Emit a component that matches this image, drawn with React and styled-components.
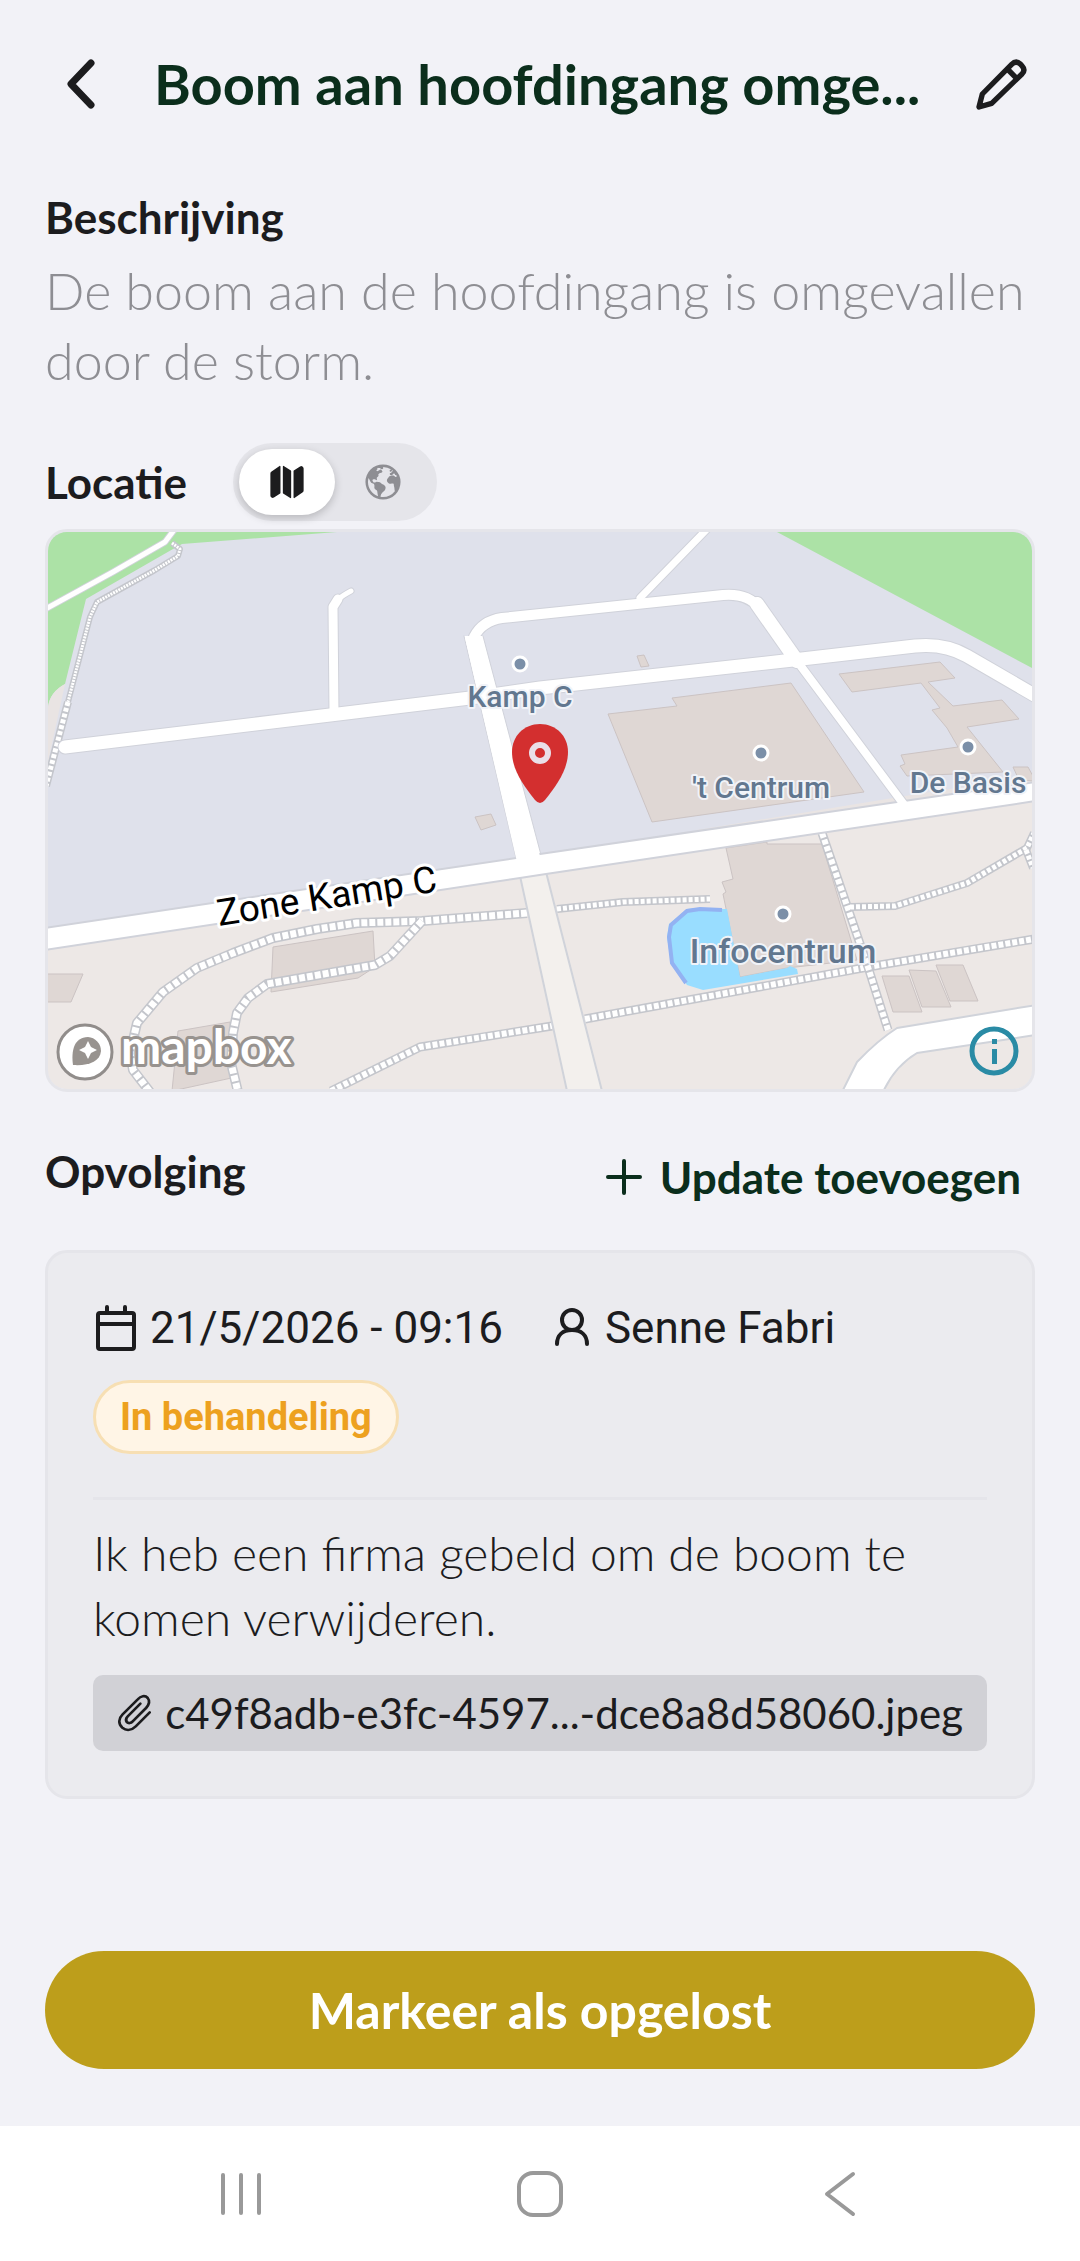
import React, { useState } from "react";
import styled, { createGlobalStyle } from "styled-components";
import { IoMap, IoEarth } from "react-icons/io5";

const color = {
  page: "#f2f2f7",
  ink: "#1c1c1e",
  brand: "#0b2e1c",
  muted: "#8e8e93",
  line: "#e5e5ea",
  card: "#ebebef",
  chip: "#d1d1d6",
  gold: "#bd9e1b",
  amber: "#eda11f",
  nav: "#999999",
};

const Global = createGlobalStyle`
  * { box-sizing: border-box; }
  body {
    margin: 0;
    background: ${color.page};
    color: ${color.ink};
    font-family: "Lato", "Liberation Sans", sans-serif;
  }
  button {
    margin: 0;
    padding: 0;
    border: 0;
    background: none;
    color: inherit;
    font: inherit;
    cursor: pointer;
  }
  h1, h2, p { margin: 0; }
  svg { display: block; }
`;

const Screen = styled.div`
  display: flex;
  flex-direction: column;
  min-height: 100vh;
`;

const Header = styled.header`
  display: flex;
  align-items: center;
  padding: 52px 45px 21px;
`;

const IconButton = styled.button`
  display: flex;
  flex: none;
  align-items: center;
  justify-content: ${(p) => p.$side};
  width: ${(p) => p.$width}px;
  height: 64px;
`;

const Title = styled.h1`
  flex: 1;
  overflow: hidden;
  color: ${color.brand};
  font-size: 56px;
  font-weight: 700;
  line-height: 64px;
  white-space: nowrap;
`;

const Content = styled.main`
  display: flex;
  flex: 1;
  flex-direction: column;
  padding: 52px 45px 40px;
`;

const Heading = styled.h2`
  font-size: 44px;
  font-weight: 700;
  line-height: 56px;
`;

const Description = styled.p`
  margin-top: 10px;
  color: ${color.muted};
  font-size: 52px;
  font-weight: 300;
  line-height: 70px;
`;

const LocationBar = styled.div`
  display: flex;
  align-items: center;
  gap: 46px;
  margin-top: 48px;
`;

const Toggle = styled.div`
  display: flex;
  padding: 6px;
  border-radius: 39px;
  background: ${color.line};
`;

const ToggleOption = styled.button`
  display: flex;
  align-items: center;
  justify-content: center;
  width: 96px;
  height: 66px;
  border-radius: 33px;
  background: ${(p) => (p.$active ? "#ffffff" : "transparent")};
  box-shadow: ${(p) => (p.$active ? "0 3px 8px rgba(0, 0, 0, 0.2)" : "none")};
  color: ${(p) => (p.$active ? color.ink : color.muted)};
`;

const MapCard = styled.div`
  position: relative;
  margin-top: 8px;
  overflow: hidden;
  border: 3px solid ${color.line};
  border-radius: 22px;
`;

const MapDrawing = styled.svg`
  width: 100%;
  height: auto;
`;

const MapLink = styled.a`
  position: absolute;
  bottom: 6px;
  left: 6px;
`;

const InfoButton = styled.button`
  position: absolute;
  right: 12px;
  bottom: 12px;
`;

const FollowUpBar = styled.div`
  display: flex;
  align-items: flex-start;
  justify-content: space-between;
  margin-top: 51px;
`;

const AddButton = styled.button`
  display: flex;
  align-items: center;
  gap: 16px;
  padding: 6px 14px;
  color: ${color.brand};
  font-size: 44px;
  font-weight: 700;
  line-height: 56px;
`;

const UpdateCard = styled.article`
  margin-top: 39px;
  padding: 45px;
  border: 3px solid ${color.line};
  border-radius: 22px;
  background: ${color.card};
`;

const Meta = styled.div`
  display: flex;
  gap: 48px;
`;

const MetaItem = styled.span`
  display: flex;
  align-items: center;
  gap: 12px;
  font-family: Roboto, "Liberation Sans", sans-serif;
  font-size: 44px;
  line-height: 60px;
`;

const Badge = styled.span`
  display: inline-block;
  margin-top: 22px;
  padding: 0 24px;
  border: 3px solid #f7dfb3;
  border-radius: 37px;
  background: #fff5e6;
  color: ${color.amber};
  font-family: Roboto, "Liberation Sans", sans-serif;
  font-size: 38px;
  font-weight: 700;
  line-height: 68px;
  vertical-align: top;
`;

const Message = styled.p`
  margin-top: 43px;
  padding-top: 20px;
  border-top: 3px solid ${color.line};
  font-size: 48px;
  font-weight: 300;
  line-height: 65px;
`;

const Attachment = styled.button`
  display: flex;
  align-items: center;
  gap: 12px;
  width: 100%;
  margin-top: 25px;
  padding: 0 24px;
  border-radius: 10px;
  background: ${color.chip};
  font-size: 42px;
  line-height: 76px;
  text-align: left;
  white-space: nowrap;
`;

const Footer = styled.footer`
  padding: 0 45px 57px;
`;

const PrimaryButton = styled.button`
  width: 100%;
  border-radius: 59px;
  background: ${color.gold};
  color: #ffffff;
  font-size: 50px;
  font-weight: 700;
  line-height: 118px;
`;

const SystemNav = styled.nav`
  display: flex;
  align-items: center;
  justify-content: space-around;
  padding: 36px 91px;
  background: #ffffff;
  color: ${color.nav};
`;

const NavButton = styled.button`
  display: flex;
  align-items: center;
  justify-content: center;
  width: 64px;
  height: 63px;
`;

function Stroke({ w, h, box, width, children }) {
  return (
    <svg
      width={w}
      height={h}
      viewBox={box || `0 0 ${w} ${h}`}
      fill="none"
      stroke="currentColor"
      strokeWidth={width}
      strokeLinecap="round"
      strokeLinejoin="round"
      aria-hidden="true"
    >
      {children}
    </svg>
  );
}

const footways = [
  { d: "M527 913 L422 921 L357 923 L317 929 L273 938 L233 953 L197 968 L163 992 L137 1023 L130 1053 L133 1070 L150 1092", w: 7 },
  { d: "M422 921 L390 956 L375 965 L267 984 L248 998 L237 1013 L233 1033 L231 1063 L238 1092", w: 7 },
  { d: "M331 1091 L420 1047 L552 1026", w: 6 },
  { d: "M557 909 L623 902 L710 899", w: 5 },
  { d: "M585 1019 L868 967 L1034 939", w: 6 },
  { d: "M822 833 L868 967 L888 1030", w: 6 },
  { d: "M850 907 L895 906 L967 883 L1027 848 L1034 833", w: 5 },
  { d: "M1026 850 L1033 868", w: 5 },
  { d: "M172 543 L180 549 L178 556 L155 570 L97 602 L90 617 L68 702", w: 3 },
  { d: "M68 702 L46 786", w: 5 },
];

const buildings = [
  "608,714 677,706 672,698 791,683 864,792 652,822",
  "637,656 644,655 649,666 641,667",
  "839,674 940,662 955,678 928,682 953,706 1002,700 1019,719 967,727 1003,772 907,776 900,766 905,764 901,755 958,747 947,728 932,710 940,708 921,683 852,692",
  "1013,767 1028,767 1034,778 1034,781 1019,780",
  "475,817 491,814 496,825 481,830",
  "273,947 373,931 375,967 358,978 271,992",
  "46,974 83,974 71,1002 46,1002",
  "178,1031 230,1022 236,1077 172,1091",
  "726,848 767,842 767,844 822,844 857,960 787,968 740,977 723,894 726,892 722,882 733,879",
  "882,976 909,976 922,1012 893,1012",
  "909,970 936,971 951,1007 922,1007",
  "936,965 963,965 978,1001 950,1001",
];

const places = [
  { name: "Kamp C", x: 520, dot: 664, y: 707, size: 30 },
  { name: "'t Centrum", x: 761, dot: 753, y: 798, size: 30 },
  { name: "De Basis", x: 968, dot: 747, y: 793, size: 30 },
  { name: "Infocentrum", x: 783, dot: 914, y: 963, size: 34 },
];

const roads = [
  { d: "M65 747 L330 715 L470 698 L540 688 L793 660 L915 646 Q945 643 967 656 L1036 696", w: 13 },
  { d: "M334 713 L333 607 L338 599", w: 9 },
  { d: "M333 607 Q334 600 351 591", w: 5 },
  { d: "M474 637 Q482 621 502 618 L560 612 L723 595 Q748 593 759 608", w: 10 },
  { d: "M757 604 L797 661", w: 14 },
  { d: "M797 661 L905 806", w: 8 },
  { d: "M640 598 L708 528", w: 7 },
  { d: "M40 612 L113 572 L165 542 L177 526", w: 5 },
];

function MapPicture() {
  return (
    <MapDrawing viewBox="48 532 984 557" role="img" aria-label="Kaart van Zone Kamp C">
      <rect x="48" y="532" width="984" height="557" fill="#dfe1eb" />
      <path d="M48 532 H337 L182 544 L173 549 L86 599 L65 684 Q50 692 48 707 Z" fill="#ace2a6" />
      <path d="M65 684 Q50 692 48 707 V762 Z" fill="#e9e4e3" />
      <path d="M777 532 H1032 V668 Z" fill="#ace2a6" />
      <path d="M48 938 L530 868 L1032 792 V1089 H48 Z" fill="#ede8e6" />
      <path d="M697 830 L905 796 L1032 776 V790 L690 840 Z" fill="#e9e4e3" />

      <g fill="#dfd7d4" stroke="#cbc3c3" strokeWidth="1">
        {buildings.map((points) => (
          <polygon key={points} points={points} />
        ))}
      </g>

      <path d="M722 909 L700 908 L687 909 L669 924 L667 937 L671 963 L687 985 L703 990 L798 974 L797 969 L790 966 L787 968 L740 977 L727 909 Z" fill="#99ddff" />
      <path d="M722 910 L700 909 L687 911 L671 925 L669 937 L672 963 L686 983" fill="none" stroke="#93b2f2" strokeWidth="4" />

      {footways.map(({ d, w }) => (
        <g key={d} fill="none" strokeLinejoin="round">
          <path d={d} stroke="#c4c6cc" strokeWidth={w + 3} />
          <path d={d} stroke="#ffffff" strokeWidth={w} strokeDasharray={w > 4 ? `${w - 1} 2` : "2 1"} />
        </g>
      ))}

      <path d="M520 876 L546 872 L602 1091 H567 Z" fill="#f3f0ed" stroke="#d0d3da" strokeWidth="2" />
      <g fill="none" strokeLinejoin="round" strokeLinecap="round">
        {roads.map(({ d, w }) => (
          <path key={d} d={d} stroke="#d0d2da" strokeWidth={w + 2} />
        ))}
        <path d="M464 636 L516 858 L541 855 L483 636" fill="#ffffff" stroke="#d0d2da" strokeWidth="1" />
        <path d="M44 928 L516 858 L540 854 L897 802 L1036 782 V801 L546 874 L520 878 L44 950 Z" fill="#ffffff" stroke="#d0d2da" strokeWidth="2" />
        <path d="M842 1092 L857 1062 Q878 1040 897 1028 L1036 1005 V1035 L917 1053 Q895 1066 883 1092 Z" fill="#ffffff" stroke="#d0d3da" strokeWidth="2" />
        {roads.map(({ d, w }) => (
          <path key={d} d={d} stroke="#ffffff" strokeWidth={w} />
        ))}
        <path d="M465 638 L517 862 L541 860 L482 638 Z" fill="#ffffff" />
      </g>

      {places.map(({ name, x, dot, y, size }) => (
        <g key={name} fontFamily="Roboto, 'Liberation Sans', sans-serif" fontWeight="500">
          <circle cx={x} cy={dot} r="7" fill="#7b8fa8" stroke="#ffffff" strokeWidth="3" />
          <text
            x={x}
            y={y}
            fontSize={size}
            textAnchor="middle"
            fill="#62778f"
            stroke="#f1f3f8"
            strokeWidth="4"
            strokeLinejoin="round"
            paintOrder="stroke"
          >
            {name}
          </text>
        </g>
      ))}
      <text
        x="219"
        y="926"
        transform="rotate(-9 219 926)"
        fontFamily="Roboto, 'Liberation Sans', sans-serif"
        fontSize="37"
        fill="#000000"
        stroke="#ffffff"
        strokeWidth="6"
        strokeLinejoin="round"
        paintOrder="stroke"
      >
        Zone Kamp C
      </text>

      <path d="M540 724 C524 724 512 736 512 752 C512 770 524 786 535 800 Q540 806 545 800 C556 786 568 770 568 752 C568 736 556 724 540 724 Z" fill="#d32f2f" />
      <circle cx="540" cy="753" r="8" fill="none" stroke="#eadfe8" strokeWidth="6" />
    </MapDrawing>
  );
}

function MapboxLogo() {
  return (
    <svg width="246" height="62" viewBox="54 1020 246 62" aria-hidden="true">
      <circle cx="85" cy="1051" r="27" fill="#ffffff" stroke="#918d8b" strokeWidth="3" />
      <path d="M73 1064 C71 1050 74 1036 88 1036 A14 14 0 0 1 101 1050 C100 1061 88 1065 73 1064 Z" fill="#98938f" />
      <path d="M88 1040 L91 1046 L97 1049 L91 1052 L88 1058 L85 1052 L79 1049 L85 1046 Z" fill="#ffffff" />
      <text
        x="121"
        y="1063"
        fontFamily="Lato, 'Liberation Sans', sans-serif"
        fontSize="48"
        fontWeight="700"
        fill="#ffffff"
        stroke="#98938f"
        strokeWidth="6"
        strokeLinejoin="round"
        paintOrder="stroke"
      >
        mapbox
      </text>
    </svg>
  );
}

export default function App() {
  const [layer, setLayer] = useState("map");
  return (
    <Screen>
      <Global />
      <Header>
        <IconButton aria-label="Terug" $side="flex-start" $width={109}>
          <Stroke w={72} h={56} width={7}>
            <path d="M46 7 L26 28 L46 49" />
          </Stroke>
        </IconButton>
        <Title>Boom aan hoofdingang omge...</Title>
        <IconButton aria-label="Bewerken" $side="flex-end" $width={64}>
          <Stroke w={64} h={56} box="256 80 192 168" width={16}>
            <path d="M280 233 L290 194 L378 105 Q391 92 404 104 L410 111 Q420 122 409 134 L318 222 Z" />
            <path d="M368 122 L392 146" />
          </Stroke>
        </IconButton>
      </Header>

      <Content>
        <Heading>Beschrijving</Heading>
        <Description>De boom aan de hoofdingang is omgevallen door de storm.</Description>

        <LocationBar>
          <Heading>Locatie</Heading>
          <Toggle role="group" aria-label="Kaartweergave">
            <ToggleOption aria-label="Kaart" aria-pressed={layer === "map"} $active={layer === "map"} onClick={() => setLayer("map")}>
              <IoMap size={38} />
            </ToggleOption>
            <ToggleOption aria-label="Satelliet" aria-pressed={layer === "earth"} $active={layer === "earth"} onClick={() => setLayer("earth")}>
              <IoEarth size={40} />
            </ToggleOption>
          </Toggle>
        </LocationBar>
        <MapCard>
          <MapPicture />
          <MapLink href="#mapbox" aria-label="Mapbox">
            <MapboxLogo />
          </MapLink>
          <InfoButton aria-label="Kaartinformatie">
            <svg width="52" height="52" viewBox="0 0 52 52" aria-hidden="true">
              <circle cx="26" cy="26" r="22" fill="none" stroke="#2a8ba5" strokeWidth="5" />
              <path d="M24 14 h5 v5 h-5 Z M24 24 h5 v15 h-5 Z" fill="#2a8ba5" />
            </svg>
          </InfoButton>
        </MapCard>

        <FollowUpBar>
          <Heading>Opvolging</Heading>
          <AddButton>
            <Stroke w={40} h={40} width={4}>
              <path d="M20 4 V36 M4 20 H36" />
            </Stroke>
            Update toevoegen
          </AddButton>
        </FollowUpBar>

        <UpdateCard>
          <Meta>
            <MetaItem>
              <Stroke w={45} h={48} width={4}>
                <rect x="5" y="9" width="36" height="36" rx="2" />
                <path d="M5 20 H41 M14 3 V9 M32 3 V9" />
              </Stroke>
              21/5/2026 - 09:16
            </MetaItem>
            <MetaItem>
              <Stroke w={42} h={48} width={4}>
                <circle cx="21" cy="16" r="10" />
                <path d="M6 40 C6 31 12 26 21 26 C30 26 36 31 36 40" />
              </Stroke>
              Senne Fabri
            </MetaItem>
          </Meta>
          <Badge>In behandeling</Badge>
          <Message>Ik heb een firma gebeld om de boom te komen verwijderen.</Message>
          <Attachment>
            <Stroke w={38} h={40} box="114 98 108 120" width={8}>
              <path d="M212 156 L170 198 C158 210 142 212 130 202 C117 190 118 175 130 163 L176 117 C185 107 198 104 206 113 C213 122 209 134 201 143 L161 183 C156 189 148 190 143 185 C139 179 141 173 146 168 L184 130" />
            </Stroke>
            c49f8adb-e3fc-4597...-dce8a8d58060.jpeg
          </Attachment>
        </UpdateCard>
      </Content>

      <Footer>
        <PrimaryButton>Markeer als opgelost</PrimaryButton>
      </Footer>
      <SystemNav aria-label="Systeemnavigatie">
        <NavButton aria-label="Recente apps">
          <Stroke w={48} h={48} width={4}>
            <path d="M6 5 V43 M24 5 V43 M42 5 V43" />
          </Stroke>
        </NavButton>
        <NavButton aria-label="Startscherm">
          <Stroke w={48} h={48} width={4}>
            <rect x="3" y="3" width="42" height="42" rx="14" />
          </Stroke>
        </NavButton>
        <NavButton aria-label="Vorige">
          <Stroke w={48} h={48} width={4}>
            <path d="M38 4 L12 24 L38 44" />
          </Stroke>
        </NavButton>
      </SystemNav>
    </Screen>
  );
}
